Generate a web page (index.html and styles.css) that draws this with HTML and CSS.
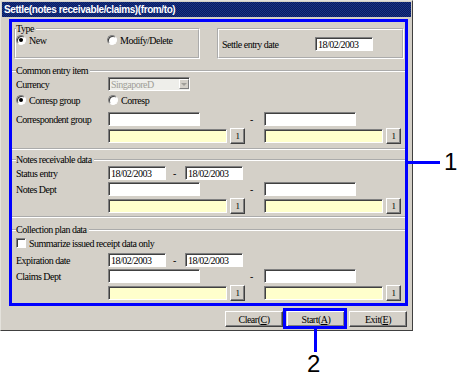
FILE: index.html
```html
<!DOCTYPE html>
<html lang="en">
<head>
    <meta charset="UTF-8">
    <title>Settle(notes receivable/claims)(from/to)</title>
    <link rel="stylesheet" href="styles.css">
</head>
<body>
    <div class="window">
        <div class="titlebar">Settle(notes receivable/claims)(from/to)</div>

        <div class="form-area">
            <div class="top-row">
                <fieldset class="group type-group">
                    <legend>Type</legend>
                    <div class="radio-row">
                        <label class="opt"><span class="radio on"></span>New</label>
                        <label class="opt"><span class="radio"></span>Modify/Delete</label>
                    </div>
                </fieldset>
                <fieldset class="group date-group">
                    <div class="date-line">
                        <span class="date-label">Settle entry date</span>
                        <input class="txt date" type="text" value="18/02/2003">
                    </div>
                </fieldset>
            </div>

            <fieldset class="section common">
                <legend>Common entry item</legend>
                <div class="row">
                    <span>Currency</span>
                    <div class="combo">
                        <span class="combo-text">SingaporeD</span>
                        <span class="combo-btn"><span class="arrow"></span></span>
                    </div>
                </div>
                <div class="radio-row gap-3">
                    <label class="opt"><span class="radio on"></span>Corresp group</label>
                    <label class="opt"><span class="radio"></span>Corresp</label>
                </div>
                <div class="row gap-6">
                    <span>Correspondent group</span>
                    <input class="txt code" type="text">
                    <span class="dash">-</span>
                    <input class="txt code" type="text">
                </div>
                <div class="row gap-2">
                    <span></span>
                    <div class="pick"><input class="txt name" type="text"><button class="pick-btn">1</button></div>
                    <span></span>
                    <div class="pick"><input class="txt name" type="text"><button class="pick-btn">1</button></div>
                </div>
            </fieldset>

            <fieldset class="section notes">
                <legend>Notes receivable data</legend>
                <div class="row">
                    <span>Status entry</span>
                    <div class="range">
                        <input class="txt date" type="text" value="18/02/2003">
                        <span class="range-dash">-</span>
                        <input class="txt date" type="text" value="18/02/2003">
                    </div>
                </div>
                <div class="row gap-2">
                    <span>Notes Dept</span>
                    <input class="txt code" type="text">
                    <span class="dash">-</span>
                    <input class="txt code" type="text">
                </div>
                <div class="row gap-2">
                    <span></span>
                    <div class="pick"><input class="txt name" type="text"><button class="pick-btn">1</button></div>
                    <span></span>
                    <div class="pick"><input class="txt name" type="text"><button class="pick-btn">1</button></div>
                </div>
            </fieldset>

            <fieldset class="section collection">
                <legend>Collection plan data</legend>
                <label class="check-row"><span class="check"></span>Summarize issued receipt data only</label>
                <div class="row gap-5">
                    <span>Expiration date</span>
                    <div class="range">
                        <input class="txt date" type="text" value="18/02/2003">
                        <span class="range-dash">-</span>
                        <input class="txt date" type="text" value="18/02/2003">
                    </div>
                </div>
                <div class="row gap-2">
                    <span>Claims Dept</span>
                    <input class="txt code" type="text">
                    <span class="dash">-</span>
                    <input class="txt code" type="text">
                </div>
                <div class="row gap-2">
                    <span></span>
                    <div class="pick"><input class="txt name" type="text"><button class="pick-btn">1</button></div>
                    <span></span>
                    <div class="pick"><input class="txt name" type="text"><button class="pick-btn">1</button></div>
                </div>
            </fieldset>
        </div>

        <div class="buttons">
            <button class="btn">Clear(<u>C</u>)</button>
            <button class="btn">Start(<u>A</u>)</button>
            <button class="btn">Exit(<u>E</u>)</button>
        </div>
    </div>

    <!-- callouts -->
    <div class="callout-box"></div>
    <div class="callout-line one"></div>
    <div class="callout-num one">1</div>
    <div class="callout-line two"></div>
    <div class="callout-num two">2</div>
</body>
</html>
```

FILE: styles.css
```css
body {
    margin: 0;
    background: #fff;
    font-family: "Liberation Serif", serif;
    font-size: 10px;
    letter-spacing: -0.5px;
    color: #000;
    position: relative;
    height: 382px;
}

.window {
    width: 413px;
    height: 331px;
    box-sizing: border-box;
    background: #d4d0c8;
    border: 1px solid;
    border-color: #e4e2dc #404040 #404040 #e4e2dc;
}

.titlebar {
    margin: 1px 1px 0;
    height: 15px;
    padding-left: 2px;
    background-color: #0c2470;
    background-image: repeating-conic-gradient(#081c62 0 25%, #1a3384 0 50%);
    background-size: 2px 2px;
    color: #fff;
    font-family: "Liberation Sans", sans-serif;
    font-weight: bold;
    font-size: 10px;
    letter-spacing: -0.4px;
    line-height: 15px;
}

.form-area {
    margin: 2px 0 0 8px;
    width: 399px;
    height: 287px;
    box-sizing: border-box;
    border: 3px solid #0000ff;
    padding-top: 1px;
}

/* group boxes */
fieldset {
    margin: 0;
    padding: 0;
    min-width: 0;
    box-sizing: border-box;
    border: 2px groove #fff;
}

legend {
    padding: 0 2px 0 0;
    line-height: 12px;
}

.top-row {
    display: flex;
}

.type-group {
    margin-left: 2px;
    width: 186px;
    height: 36px;
}

.date-group {
    margin: 5px 0 0 17px;
    width: 187px;
    height: 31px;
    padding: 7px 0 0 3px;
}

.date-line {
    display: flex;
    align-items: center;
    height: 14px;
}

.date-label {
    width: 93px;
}

.radio-row {
    display: flex;
    align-items: center;
    height: 12px;
    margin-top: -1px;
}

.opt {
    display: flex;
    align-items: center;
    gap: 3px;
    width: 92px;
}

.radio {
    position: relative;
    width: 10px;
    height: 10px;
    box-sizing: border-box;
    border-radius: 50%;
    background: #fff;
    border: 1px solid;
    border-color: #808080 #fff #fff #808080;
    box-shadow: inset 1px 1px 0 #404040;
}

.radio.on::after {
    content: "";
    position: absolute;
    left: 2px;
    top: 2px;
    width: 4px;
    height: 4px;
    border-radius: 50%;
    background: #000;
}

.section {
    padding: 0 0 0 4px;
    border-left: 0;
    border-right: 0;
}

.common {
    margin-top: 6px;
    padding-bottom: 6px;
}

.notes {
    margin-top: 4px;
    padding-bottom: 4px;
}

.collection {
    margin-top: 6px;
    border-bottom: 0;
}

.row {
    display: grid;
    grid-template-columns: 92px 137px 19px 137px;
    align-items: center;
    height: 14px;
}

.gap-2 { margin-top: 2px; }
.gap-3 { margin-top: 3px; }
.gap-5 { margin-top: 5px; }
.gap-6 { margin-top: 6px; }

.dash {
    padding-left: 5px;
}

.range {
    display: flex;
    align-items: center;
}

.range-dash {
    width: 19px;
    padding-left: 7px;
    box-sizing: border-box;
}

.pick {
    display: flex;
    align-items: center;
    gap: 3px;
}

/* sunken edit boxes */
.txt {
    margin: 0;
    height: 14px;
    box-sizing: border-box;
    padding: 0 0 0 2px;
    border: 1px solid;
    border-color: #808080 #fff #fff #808080;
    box-shadow: inset 1px 1px 0 #404040;
    background: #fff;
    font: inherit;
    letter-spacing: inherit;
    color: #000;
    outline: none;
}

.txt.date { width: 58px; }
.txt.code { width: 92px; }
.txt.name { width: 119px; background: #ffffcc; }

.combo {
    display: flex;
    width: 82px;
    height: 14px;
    box-sizing: border-box;
    border: 1px solid;
    border-color: #808080 #fff #fff #808080;
    box-shadow: inset 1px 1px 0 #404040;
    background: #eeeeea;
}

.combo-text {
    flex: 1;
    padding: 1px 0 0 2px;
    color: #a09e98;
    line-height: 11px;
}

.combo-btn {
    display: flex;
    align-items: center;
    justify-content: center;
    width: 10px;
    margin: 1px 0;
    box-sizing: border-box;
    background: #d4d0c8;
    border: 1px solid;
    border-color: #fff #808080 #808080 #fff;
}

.arrow {
    width: 0;
    height: 0;
    border-left: 3px solid transparent;
    border-right: 3px solid transparent;
    border-top: 3px solid #a09e98;
}

/* raised buttons */
.pick-btn,
.btn {
    margin: 0;
    padding: 0;
    box-sizing: border-box;
    background: #d4d0c8;
    border: 1px solid;
    border-color: #fff #404040 #404040 #fff;
    box-shadow: inset -1px -1px 0 #808080;
    font: inherit;
    letter-spacing: inherit;
    color: #000;
    text-align: center;
}

.pick-btn {
    width: 15px;
    height: 16px;
    line-height: 13px;
    font-size: 9px;
}

.check-row {
    display: flex;
    align-items: center;
    gap: 3px;
    height: 10px;
    margin-top: 2px;
}

.check {
    width: 10px;
    height: 10px;
    box-sizing: border-box;
    border: 1px solid;
    border-color: #808080 #fff #fff #808080;
    box-shadow: inset 1px 1px 0 #404040;
    background: #fff;
}

.buttons {
    display: flex;
    justify-content: flex-end;
    gap: 4px;
    margin-top: 5px;
    padding-right: 5px;
}

.btn {
    width: 58px;
    height: 16px;
    line-height: 13px;
}

.btn u {
    text-decoration-thickness: 1px;
}

/* annotation callouts over the screenshot */
.callout-box {
    position: absolute;
    left: 283px;
    top: 308px;
    width: 64px;
    height: 21px;
    box-sizing: border-box;
    border: 3px solid #0000ff;
}

.callout-line {
    position: absolute;
    background: #0000ff;
}

.callout-line.one {
    left: 408px;
    top: 161px;
    width: 32px;
    height: 3px;
}

.callout-line.two {
    left: 314px;
    top: 329px;
    width: 3px;
    height: 23px;
}

.callout-num {
    position: absolute;
    font-family: "Liberation Sans", Arial, sans-serif;
    font-size: 24px;
    line-height: 24px;
    letter-spacing: 0;
}

.callout-num.one {
    left: 444px;
    top: 150px;
}

.callout-num.two {
    left: 307px;
    top: 352px;
}
```
